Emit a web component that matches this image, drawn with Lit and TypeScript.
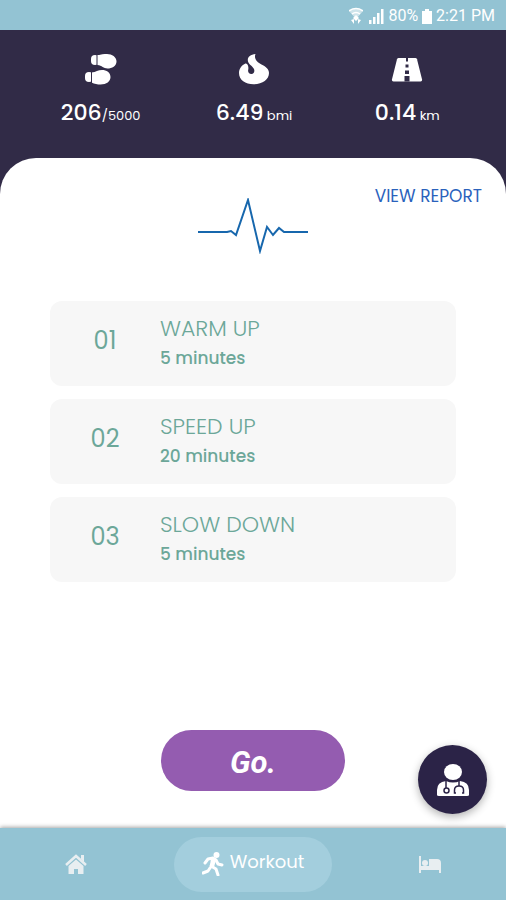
import { LitElement, html, css, svg } from "lit";
import { customElement, property } from "lit/decorators.js";

const steps = svg`
  <rect x="6" y="1" width="8" height="10" rx="4"/>
  <path d="M12 1h3v10h-3z"/>
  <path d="M12.500 1.500C16 .3 19 0 22 0c5 0 9.500 3 9.500 7.500S27 14.500 22.500 14.500c-4 0-5.500-3-10-3.500z"/>
  <path d="M12 1v10" stroke="#312b47" stroke-width="1"/>
  <rect x="0" y="18" width="8" height="10" rx="4"/>
  <path d="M6.500 28.500c3 1.500 6 2 9 2 6 0 10-3 10-7.500s-4-7-8.500-7c-4 0-6 2-10.500 2.500z"/>
  <path d="M6.500 18v11" stroke="#312b47" stroke-width="1"/>`;
const flame = svg`<path d="M17.500 0C12 .5 9 3.500 10 7.500c.8 3 4.500 4.500 6 7.500 1 2.500-.2 4.800-2.500 5-2.500.1-3.800-1.800-3.300-4.200.4-1.800.2-4.300-1-5.600-.6-.7-1.500-.9-2.200-.4C3.500 11.500 1 15 1 19c0 7 6.500 11.300 14.500 11.300C24.500 30.300 31 25.500 31 19c0-4-3.500-6.500-7.500-8.500C19.500 8.500 15.500 5 17.500 0z"/>`;
const road = svg`
  <path d="M6.500 0h17q1 0 1.500 1.200l5 20q.5 2.300-1.500 2.300H1.500q-2 0-1.500-2.300l5-20Q5.500 0 6.500 0z"/>
  <path d="M14 0h2v3.500h-2zM13.500 6.500h3v3h-3zM13 12.500h4v3.500h-4zM12.500 18h5v5.500h-5z" fill="#312b47"/>`;

@customElement("stat-tile")
class StatTile extends LitElement {
  @property() kind = "steps";
  @property() value = "";
  @property() unit = "";
  static styles = css`
    :host { display: flex; flex-direction: column; align-items: center; color: #fff; }
    svg { width: 32px; height: 32px; fill: #fff; overflow: visible; }
    .line { margin-top: 10px; line-height: 34px; font-size: 22px; font-weight: 500; white-space: nowrap; }
    .unit { font-size: 13px; font-weight: 400; }
  `;
  render() {
    const icon = this.kind === "steps" ? steps : this.kind === "flame" ? flame : svg`<g transform="translate(1 4)">${road}</g>`;
    return html`
      <svg viewBox="0 0 32 32" aria-hidden="true">${icon}</svg>
      <div class="line">${this.value}<span class="unit">${this.unit}</span></div>`;
  }
}

@customElement("app-root")
class AppRoot extends LitElement {
  private stages = [
    { no: "01", name: "WARM UP", time: "5 minutes" },
    { no: "02", name: "SPEED UP", time: "20 minutes" },
    { no: "03", name: "SLOW DOWN", time: "5 minutes" },
  ];

  static styles = css`
    :host {
      display: flex; flex-direction: column; min-height: 100vh; box-sizing: border-box;
      background: #312b47; font-family: Poppins, Inter, "Liberation Sans", sans-serif;
    }
    button { border: 0; padding: 0; font-family: inherit; cursor: pointer; }
    .status {
      display: flex; align-items: center; justify-content: flex-end; gap: 4px; box-sizing: border-box;
      height: 30px; padding: 2px 11px 0; background: #93c3d3; color: #fff;
      font: 400 16px/28px Roboto, sans-serif;
    }
    .status svg { fill: #fff; }
    .wifi { margin-right: 2px; }
    .stats { display: grid; grid-template-columns: repeat(3, 1fr); padding: 24px 22px 27px 24px; }
    main {
      position: relative; flex: 1; display: flex; flex-direction: column; margin-top: -2px;
      background: #fff; border-radius: 36px 36px 0 0; padding: 24px 24px 37px;
    }
    .report { align-self: flex-end; color: #2a62bc; font-size: 17px; line-height: 28px; text-decoration: none; }
    .pulse { align-self: center; width: 110px; height: 56px; margin-top: -12px; fill: none; stroke: #1767ad; stroke-width: 2; }
    ol { list-style: none; margin: 47px 26px 40px; padding: 0; display: grid; gap: 13px; }
    li {
      display: grid; grid-template-columns: 110px 1fr; align-items: center;
      height: 85px; border-radius: 12px; background: #f7f7f7; color: #6ca799;
    }
    .no { text-align: center; font-size: 24px; line-height: 32px; padding-bottom: 6px; }
    .text { padding-bottom: 4px; }
    .name { font-size: 22px; line-height: 32px; font-weight: 300; }
    .time { font-size: 17px; line-height: 26px; font-weight: 500; }
    .go {
      align-self: center; margin-top: auto; box-sizing: border-box; width: 184px; height: 61px;
      padding-top: 4px; border-radius: 31px;
      background: #945cb0; color: #fff; font: italic 700 31px/57px Roboto, sans-serif;
    }
    .coach {
      position: absolute; right: 19px; bottom: 14px; width: 69px; height: 69px;
      border-radius: 50%; background: #2b2347; box-shadow: 0 3px 8px rgba(0, 0, 0, .3);
    }
    .coach svg { display: block; margin: auto; width: 32px; height: 32px; }
    nav {
      position: relative; display: grid; grid-template-columns: 1fr 158px 1fr; gap: 22px;
      align-items: center; justify-items: center;
      height: 72px; background: #93c3d3; box-shadow: 0 -1px 4px rgba(0, 0, 0, .35);
    }
    nav a { display: flex; align-items: center; justify-content: center; color: #fff; text-decoration: none; }
    nav svg { fill: currentColor; }
    .side { width: 48px; height: 48px; color: #e8eef1; }
    .active { gap: 6px; width: 158px; height: 55px; border-radius: 28px; background: #a3cedd; font-size: 18px; line-height: 28px; }
    .active span { padding-bottom: 4px; }
  `;

  render() {
    return html`
      <div class="status">
        <svg class="wifi" width="14" height="18" viewBox="0 0 14 18" aria-hidden="true">
          <path d="M0 4Q7-1 14 4L7 12z" opacity=".55"/>
          <path d="M0 4Q7-1 14 4M3 7q4-3 8 0" fill="none" stroke="#fff" stroke-width="1.500"/>
          <path d="M7 8l3 3-3 3-3-3zM2 13l3-1v5zM12 13l-3-1v5z"/>
        </svg>
        <svg width="15" height="15" viewBox="0 0 15 15" aria-hidden="true">
          <path d="M0 11h2.500v4H0zM4 8h2.500v7H4zM8 4h2.500v11H8zM12 0h2.500v15H12z"/>
        </svg>
        <span>80%</span>
        <svg width="10" height="15" viewBox="0 0 10 15" aria-hidden="true"><path d="M3 0h4v2h3v13H0V2h3z"/></svg>
        <span>2:21 PM</span>
      </div>
      <header class="stats">
        <stat-tile kind="steps" value="206" unit="/5000"></stat-tile>
        <stat-tile kind="flame" value="6.49" unit=" bmi"></stat-tile>
        <stat-tile kind="road" value="0.14" unit=" km"></stat-tile>
      </header>
      <main>
        <a class="report" href="#report">VIEW REPORT</a>
        <svg class="pulse" viewBox="0 0 110 56" aria-hidden="true">
          <path d="M0 34h29l4-1 5 4L50 2l12 51 7-24 6 8 6-7 5 4h24"/>
        </svg>
        <ol>
          ${this.stages.map((s) => html`
            <li>
              <div class="no">${s.no}</div>
              <div class="text"><div class="name">${s.name}</div><div class="time">${s.time}</div></div>
            </li>`)}
        </ol>
        <button class="go">Go.</button>
        <button class="coach" aria-label="Coach">
          <svg viewBox="0 0 32 32" aria-hidden="true">
            <ellipse cx="16" cy="8" rx="9" ry="8" fill="#fff"/>
            <path d="M0 31v-5q0-8 9-9 7 3 14 0 9 1 9 9v5q0 1-2 1H2q-2 0-2-1z" fill="#fff"/>
            <g fill="none" stroke="#2b2347" stroke-width="1.500">
              <path d="M9 16v8M22 16v6"/><circle cx="9.500" cy="26.500" r="2.500"/>
              <path d="M19 29h-1.500v-3q0-4 4.500-4t4.500 4v3H25"/>
            </g>
          </svg>
        </button>
      </main>
      <nav>
        <a class="side" href="#home" aria-label="Home">
          <svg width="22" height="20" viewBox="0 0 22 20" aria-hidden="true">
            <path d="M1 11L11 2l10 9" fill="none" stroke="currentColor" stroke-width="2.500"/>
            <path d="M16 1h3v7l-3-3zM3.500 12L11 5.500l7.500 6.500v8H13v-5H9v5H3.500z"/>
          </svg>
        </a>
        <a class="active" href="#workout" aria-current="page">
          <svg width="22" height="24" viewBox="0 0 22 24" aria-hidden="true">
            <circle cx="14.500" cy="3" r="3"/>
            <path d="M3 11l3-4 5-1 3 2 2 4 4 1M12 8l-3 6 5 3 2 6M8 16l-2 3-5 2" fill="none" stroke="currentColor" stroke-width="3" stroke-linecap="round" stroke-linejoin="round"/>
            <path d="M9 6l5 2-2 7-4-1z"/>
          </svg>
          <span>Workout</span>
        </a>
        <a class="side" href="#sleep" aria-label="Sleep">
          <svg width="22" height="17" viewBox="0 0 22 17" aria-hidden="true">
            <path d="M0 0h2v11h18v-1h2v7h-2v-3H2v3H0z"/><circle cx="6" cy="7" r="3"/>
            <path d="M10 3h8q4 0 4 4v6H2v-3h8z"/>
          </svg>
        </a>
      </nav>`;
  }
}
